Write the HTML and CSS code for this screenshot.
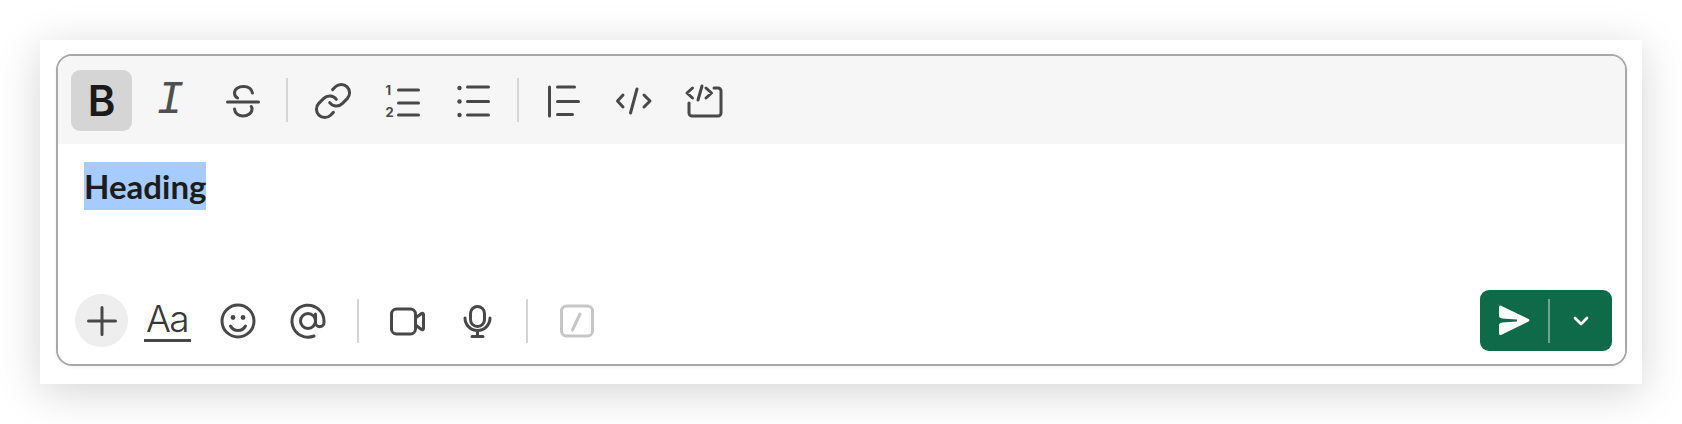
FILE: index.html
```html
<!DOCTYPE html>
<html lang="en">
<head>
  <meta charset="UTF-8">
  <title>Composer</title>
  <link rel="stylesheet" href="styles.css">
</head>
<body>
  <div class="card">
    <div class="composer">

      <!-- formatting bar -->
      <div class="format-bar">
        <span class="tool tool-active"><span class="glyph-bold">B</span></span>
        <span class="tool"><span class="glyph-italic">I</span></span>
        <span class="tool">
          <svg class="icon" viewBox="0 0 40 40"><path d="M5.500 21h31M30.500 12c-1-4.500-5-6.500-9-6.500-5 0-9 2.500-9 6.500 0 2 1 4 3 5M12.500 28c.5 5 4.500 7 8.500 7 5 0 9-3 9-7 0-1-.3-2-.7-2.500"/></svg>
        </span>
        <span class="sep"></span>
        <span class="tool">
          <svg class="icon icon-link" viewBox="0 0 24 24"><path d="M10 13a5 5 0 0 0 7.54.54l3-3a5 5 0 0 0-7.070-7.070l-1.720 1.710"/><path d="M14 11a5 5 0 0 0-7.540-.54l-3 3a5 5 0 0 0 7.070 7.070l1.710-1.710"/></svg>
        </span>
        <span class="tool">
          <svg class="icon" viewBox="0 0 40 40"><text class="num" x="2.500" y="14">1</text><text class="num" x="2.500" y="36">2</text><path d="M15.500 9h20M15.500 22h20M15.500 34h20"/></svg>
        </span>
        <span class="tool">
          <svg class="icon" viewBox="0 0 40 40"><path d="M14.500 6h21M14.500 20.500h21M14.500 34h21"/><circle class="dot" cx="6.500" cy="7" r="2.200"/><circle class="dot" cx="6.500" cy="20.500" r="2.200"/><circle class="dot" cx="6.500" cy="34" r="2.200"/></svg>
        </span>
        <span class="sep"></span>
        <span class="tool">
          <svg class="icon" viewBox="0 0 40 40"><path d="M5.500 6v29M13.500 6h17M13.500 20.500h21M13.500 33.500h15"/></svg>
        </span>
        <span class="tool">
          <svg class="icon" viewBox="0 0 40 40"><path d="M9 14l-5.500 6 5.500 6M23 8l-6.500 24M30 14l6 6-6 6"/></svg>
        </span>
        <span class="tool">
          <svg class="icon" viewBox="0 0 40 40"><path d="M5 22v10a3 3 0 0 0 3 3h26a3 3 0 0 0 3-3V10a3 3 0 0 0-3-3h-4M8.500 7L3 12l5.500 5M18 5l-4 14M22 7l5.500 5-5.500 5"/></svg>
        </span>
      </div>

      <div class="editor">
        <span class="selected">Heading</span>
      </div>

      <!-- bottom actions -->
      <div class="action-bar">
        <span class="tool tool-round">
          <svg class="icon" viewBox="0 0 40 40"><path d="M6.500 20h27M20 6.500v27"/></svg>
        </span>
        <span class="tool"><span class="glyph-aa">Aa</span></span>
        <span class="tool">
          <svg class="icon" viewBox="0 0 40 40"><circle cx="20" cy="20" r="16"/><circle class="dot" cx="15" cy="16.500" r="2.400"/><circle class="dot" cx="25" cy="16.500" r="2.400"/><path d="M12.500 25a8.500 8.500 0 0 0 15 0"/></svg>
        </span>
        <span class="tool">
          <svg class="icon" viewBox="0 0 40 40"><circle cx="20" cy="20" r="7.500"/><path d="M26 35A16 16 0 1 1 36 20v1.500a4.200 4.200 0 0 1-8.500 0V13"/></svg>
        </span>
        <span class="sep sep-wide"></span>
        <span class="tool">
          <svg class="icon" viewBox="0 0 40 40"><rect x="4.500" y="8" width="24" height="25" rx="5"/><path d="M28.500 17l6-4.500c1-.5 2 0 2 1v14c0 1-1 1.500-2 1l-6-4.500"/></svg>
        </span>
        <span class="tool">
          <svg class="icon" viewBox="0 0 40 40"><rect x="13.500" y="5.500" width="14" height="20" rx="7"/><path d="M8 17a12.500 12.500 0 0 0 25 0M20.500 30v5M15 35.500h11"/></svg>
        </span>
        <span class="sep sep-wide"></span>
        <span class="tool">
          <svg class="icon icon-off" viewBox="0 0 40 40"><rect x="5.500" y="5" width="31" height="30" rx="5"/><path d="M24 13l-7.500 16"/></svg>
        </span>

        <div class="send">
          <span class="send-main">
            <svg class="send-arrow" viewBox="0 0 31 31"><path d="M0 2.500C0 .8 1 .2 2.500.9L29.500 14c1.200.6 1.200 1.800 0 2.400L2.500 29.800C1 30.500 0 29.900 0 28.300V20.500C0 18.500 1 18 3 17.500L18 16.500V14.500L3 13.500C1 13 0 12.500 0 10.500z"/></svg>
          </span>
          <span class="send-line"></span>
          <span class="send-more">
            <svg class="send-chevron" viewBox="0 0 20 12"><path d="M4 3l6 6 6-6"/></svg>
          </span>
        </div>
      </div>

    </div>
  </div>
</body>
</html>
```

FILE: styles.css
```css
* {
  margin: 0;
  padding: 0;
  box-sizing: border-box;
}

body {
  background-color: #fff;
  font-family: "Lato", sans-serif;
  color: #1d1c1d;
  height: 424px;
  overflow: hidden;
}

.card {
  margin: 40px 40px 0;
  height: 344px;
  padding: 14px 15px 18px 16px;
  background-color: #fff;
  box-shadow: 0 8px 40px rgba(0, 0, 0, 0.17);
}

.composer {
  height: 312px;
  display: flex;
  flex-direction: column;
  border: 2px solid #a8a8a8;
  border-radius: 16px;
  overflow: hidden;
  box-shadow: 0 1px 4px rgba(0, 0, 0, 0.06);
}

.format-bar {
  height: 88px;
  flex-shrink: 0;
  display: flex;
  align-items: flex-start;
  gap: 9px;
  padding: 14px 13px 0;
  background-color: #f6f6f6;
}

.tool {
  width: 61px;
  height: 61px;
  flex-shrink: 0;
  display: flex;
  align-items: center;
  justify-content: center;
  border-radius: 9px;
}

.tool-active {
  background-color: #d5d5d5;
}

.tool-round {
  width: 53px;
  height: 53px;
  border-radius: 50%;
  background-color: #eeeeee;
}

.sep {
  width: 2px;
  height: 44px;
  margin: 8px 5px 0;
  flex-shrink: 0;
  background-color: #d5d5d5;
}

.sep-wide {
  margin: 0 8.500px 0 9.500px;
}

/* icons */
.icon {
  width: 40px;
  height: 40px;
  fill: none;
  stroke: #484848;
  stroke-width: 3;
  stroke-linecap: round;
  stroke-linejoin: round;
}

.icon-link {
  stroke-width: 1.800;
}

.icon-off {
  stroke: #c6c6c6;
}

.icon .dot {
  fill: #484848;
  stroke: none;
}

.icon .num {
  font-family: "Inter", sans-serif;
  font-size: 13px;
  font-weight: 700;
  fill: #484848;
  stroke: none;
}

.glyph-bold {
  font-family: "Inter", sans-serif;
  font-size: 42px;
  font-weight: 600;
  line-height: 1;
  color: #1a1a1a;
}

.glyph-italic {
  font-family: "Liberation Mono", monospace;
  font-size: 46px;
  font-style: italic;
  line-height: 1;
  color: #505050;
  margin-right: 3px;
}

.glyph-aa {
  font-family: "Inter", sans-serif;
  font-size: 37px;
  font-weight: 300;
  line-height: 40px;
  letter-spacing: -1.500px;
  padding: 0 3px 0 2px;
  color: #383838;
  border-bottom: 3px solid #484848;
}

/* message area */
.editor {
  flex: 1;
  padding: 18px 26px 0;
  background-color: #fff;
}

.selected {
  display: inline-block;
  font-size: 33px;
  font-weight: 700;
  line-height: 48px;
  background-color: #a6ccff;
}

.action-bar {
  height: 74px;
  flex-shrink: 0;
  display: flex;
  align-items: center;
  gap: 9px;
  padding: 0 13px 13px 17px;
  background-color: #fff;
}

/* send button */
.send {
  width: 132px;
  height: 61px;
  margin-left: auto;
  display: flex;
  align-items: center;
  border-radius: 9px;
  background-color: #0f6a4a;
}

.send-main {
  width: 68px;
  display: flex;
  justify-content: center;
}

.send-arrow {
  width: 31px;
  height: 31px;
  fill: #fff;
}

.send-line {
  width: 2px;
  height: 44px;
  background-color: rgba(255, 255, 255, 0.4);
}

.send-more {
  flex: 1;
  display: flex;
  justify-content: center;
}

.send-chevron {
  width: 20px;
  height: 12px;
  fill: none;
  stroke: #fff;
  stroke-width: 2.800;
  stroke-linecap: round;
  stroke-linejoin: round;
}
```
